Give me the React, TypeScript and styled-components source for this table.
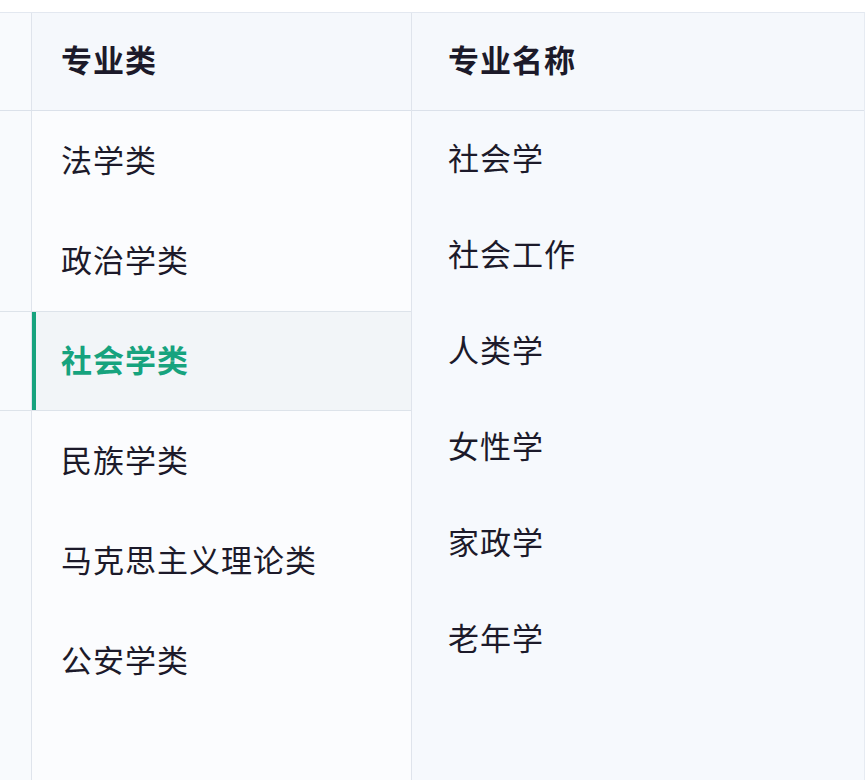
import React from "react";
import styled, { createGlobalStyle } from "styled-components";

const Global = createGlobalStyle`
  html, body { margin: 0; padding: 0; background: #ffffff; }
  body { font-family: "Noto Sans CJK SC", "Noto Sans", sans-serif; }
`;

const Page = styled.div`
  height: 780px;
  box-sizing: border-box;
  padding-top: 12px;
  overflow: hidden;
`;

const Table = styled.div`
  display: flex;
  height: 100%;
  border-top: 1px solid #e3e8f0;
  border-right: 1px solid #e6ebf2;
  margin-right: 1px;
`;

const LeftPane = styled.div`
  width: 411px;
  flex: none;
  display: flex;
  flex-direction: column;
  background: #fbfcfe;
  border-right: 1px solid #dfe4ec;
`;

const RightPane = styled.div`
  flex: 1;
  display: flex;
  flex-direction: column;
  background: #f6f9fd;
`;

const Row = styled.div<{ $h: number; $selected?: boolean; $header?: boolean }>`
  display: flex;
  height: ${(p) => p.$h}px;
  flex: none;
  box-sizing: border-box;
  ${(p) => (p.$header ? "background: #f5f8fc; border-bottom: 1px solid #dbe1ea;" : "")}
  ${(p) =>
    p.$selected
      ? "background: #f2f5f8; border-top: 1px solid #dde3ea; border-bottom: 1px solid #dde3ea;"
      : ""}
`;

const Gutter = styled.div`
  width: 31px;
  flex: none;
  border-right: 1px solid #dfe4ec;
  background: #f8fafd;
`;

const Cell = styled.div<{ $pad: number; $selected?: boolean; $header?: boolean }>`
  flex: 1;
  display: flex;
  align-items: center;
  padding-left: ${(p) => p.$pad}px;
  padding-bottom: 6px;
  font-size: 31px;
  font-weight: ${(p) => (p.$header || p.$selected ? 700 : 400)};
  color: ${(p) => (p.$selected ? "#17a37e" : "#1c1a2a")};
  letter-spacing: 1px;
  border-left: 4px solid ${(p) => (p.$selected ? "#17a37e" : "transparent")};
  white-space: nowrap;
`;

const Filler = styled.div`
  flex: 1;
  display: flex;
`;

const categories = ["法学类", "政治学类", "社会学类", "民族学类", "马克思主义理论类", "公安学类"];
const majors = ["社会学", "社会工作", "人类学", "女性学", "家政学", "老年学"];
const selected = 2;

export default function App() {
  return (
    <>
      <Global />
      <Page>
        <Table>
          <LeftPane>
            <Row $h={98} $header>
              <Gutter />
              <Cell $pad={25} $header>专业类</Cell>
            </Row>
            {categories.map((c, i) => (
              <Row key={c} $h={100} $selected={i === selected}>
                <Gutter />
                <Cell $pad={25} $selected={i === selected}>{c}</Cell>
              </Row>
            ))}
            <Filler>
              <Gutter />
            </Filler>
          </LeftPane>
          <RightPane>
            <Row $h={98} $header>
              <Cell $pad={32} $header>专业名称</Cell>
            </Row>
            {majors.map((m) => (
              <Row key={m} $h={96}>
                <Cell $pad={32}>{m}</Cell>
              </Row>
            ))}
          </RightPane>
        </Table>
      </Page>
    </>
  );
}
